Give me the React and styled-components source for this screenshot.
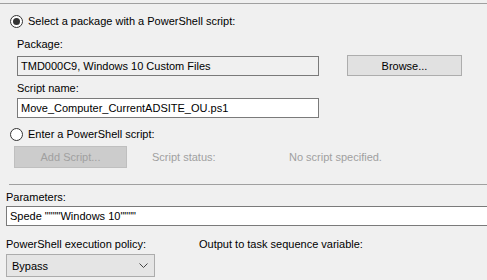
import styled, { createGlobalStyle } from "styled-components";

const GlobalStyle = createGlobalStyle`
  html, body {
    margin: 0;
    padding: 0;
    background: #f0f0f0;
  }
  body {
    font-family: "Liberation Sans", Arial, sans-serif;
    font-size: 11px;
    color: #000;
  }
`;

const Window = styled.div`
  width: 487px;
  height: 280px;
  overflow: hidden;
  background: #f0f0f0;
  padding-top: 3px;
  box-sizing: border-box;
`;

const Rule = styled.div`
  height: 1px;
  background: #a0a0a0;
  margin-top: ${({ $top }) => $top || 0}px;
  margin-left: ${({ $inset }) => $inset || 0}px;
`;

const Section = styled.div`
  display: flex;
  flex-direction: column;
  padding-left: ${({ $left }) => $left}px;
`;

const RadioRow = styled.label`
  display: flex;
  align-items: center;
  gap: 5px;
  height: 16px;
  margin-top: ${({ $top }) => $top}px;
  margin-left: 10px;
  white-space: nowrap;
`;

const Radio = styled.span`
  width: 11px;
  height: 11px;
  border: 1px solid #333;
  border-radius: 50%;
  background: #fff;
  display: flex;
  align-items: center;
  justify-content: center;

  &::after {
    content: "";
    width: 7px;
    height: 7px;
    border-radius: 50%;
    background: ${({ $checked }) => ($checked ? "#333" : "transparent")};
  }
`;

const Label = styled.div`
  height: 15px;
  line-height: 15px;
  margin-top: ${({ $top }) => $top}px;
  color: ${({ $disabled }) => ($disabled ? "#a0a0a0" : "#000")};
  white-space: nowrap;
`;

const Row = styled.div`
  display: flex;
  align-items: ${({ $align }) => $align || "center"};
  gap: ${({ $gap }) => $gap || 0}px;
  margin-top: ${({ $top }) => $top || 0}px;
`;

const TextBox = styled.div`
  box-sizing: border-box;
  width: ${({ $width }) => $width};
  height: 20px;
  line-height: 18px;
  padding-left: 3px;
  border: 1px solid #7a7a7a;
  background: ${({ $readOnly }) => ($readOnly ? "#f0f0f0" : "#fff")};
  white-space: nowrap;
  overflow: hidden;
  flex-shrink: 0;
`;

const Button = styled.div`
  box-sizing: border-box;
  width: ${({ $width }) => $width}px;
  height: ${({ $height }) => $height}px;
  display: flex;
  align-items: center;
  justify-content: center;
  border: 1px solid ${({ $disabled }) => ($disabled ? "#bfbfbf" : "#adadad")};
  background: ${({ $disabled }) => ($disabled ? "#cccccc" : "#e1e1e1")};
  color: ${({ $disabled }) => ($disabled ? "#a0a0a0" : "#000")};
  flex-shrink: 0;
`;

const StatusLabel = styled.span`
  color: #a0a0a0;
  width: ${({ $width }) => ($width ? `${$width}px` : "auto")};
  margin-left: ${({ $left }) => $left || 0}px;
  white-space: nowrap;
`;

const Column = styled.div`
  display: flex;
  flex-direction: column;
  width: ${({ $width }) => $width}px;
`;

const Select = styled.div`
  box-sizing: border-box;
  width: 149px;
  height: 23px;
  display: flex;
  align-items: center;
  justify-content: space-between;
  padding: 0 6px 0 5px;
  border: 1px solid #acacac;
  background: #e5e5e5;
  margin-top: 2px;
`;

const Chevron = () => (
  <svg width="9" height="6" viewBox="0 0 9 6">
    <path d="M0.5 0.5 L4.5 4.5 L8.5 0.5" fill="none" stroke="#444" strokeWidth="1" />
  </svg>
);

export default function App() {
  return (
    <Window>
      <GlobalStyle />
      <Rule />
      <RadioRow $top={9}>
        <Radio $checked />
        <span>Select a package with a PowerShell script:</span>
      </RadioRow>
      <Section $left={17}>
        <Label $top={8}>Package:</Label>
        <Row $top={3} $gap={28}>
          <TextBox $width="302px" $readOnly>
            TMD000C9, Windows 10 Custom Files
          </TextBox>
          <Button $width={115} $height={21}>
            Browse...
          </Button>
        </Row>
        <Label $top={5}>Script name:</Label>
        <Row $top={2}>
          <TextBox $width="302px">Move_Computer_CurrentADSITE_OU.ps1</TextBox>
        </Row>
      </Section>
      <RadioRow $top={8}>
        <Radio />
        <span>Enter a PowerShell script:</span>
      </RadioRow>
      <Section $left={14}>
        <Row $top={4}>
          <Button $width={113} $height={22} $disabled>
            Add Script...
          </Button>
          <StatusLabel $width={137} $left={25}>
            Script status:
          </StatusLabel>
          <StatusLabel>No script specified.</StatusLabel>
        </Row>
      </Section>
      <Rule $top={16} $inset={9} />
      <Section $left={6}>
        <Label $top={5}>Parameters:</Label>
        <Row $top={1}>
          <TextBox $width="490px">Spede """"Windows 10""""</TextBox>
        </Row>
        <Row $top={11} $align="flex-start">
          <Column $width={193}>
            <Label $top={0}>PowerShell execution policy:</Label>
            <Select>
              <span>Bypass</span>
              <Chevron />
            </Select>
          </Column>
          <Label $top={0}>Output to task sequence variable:</Label>
        </Row>
      </Section>
    </Window>
  );
}
